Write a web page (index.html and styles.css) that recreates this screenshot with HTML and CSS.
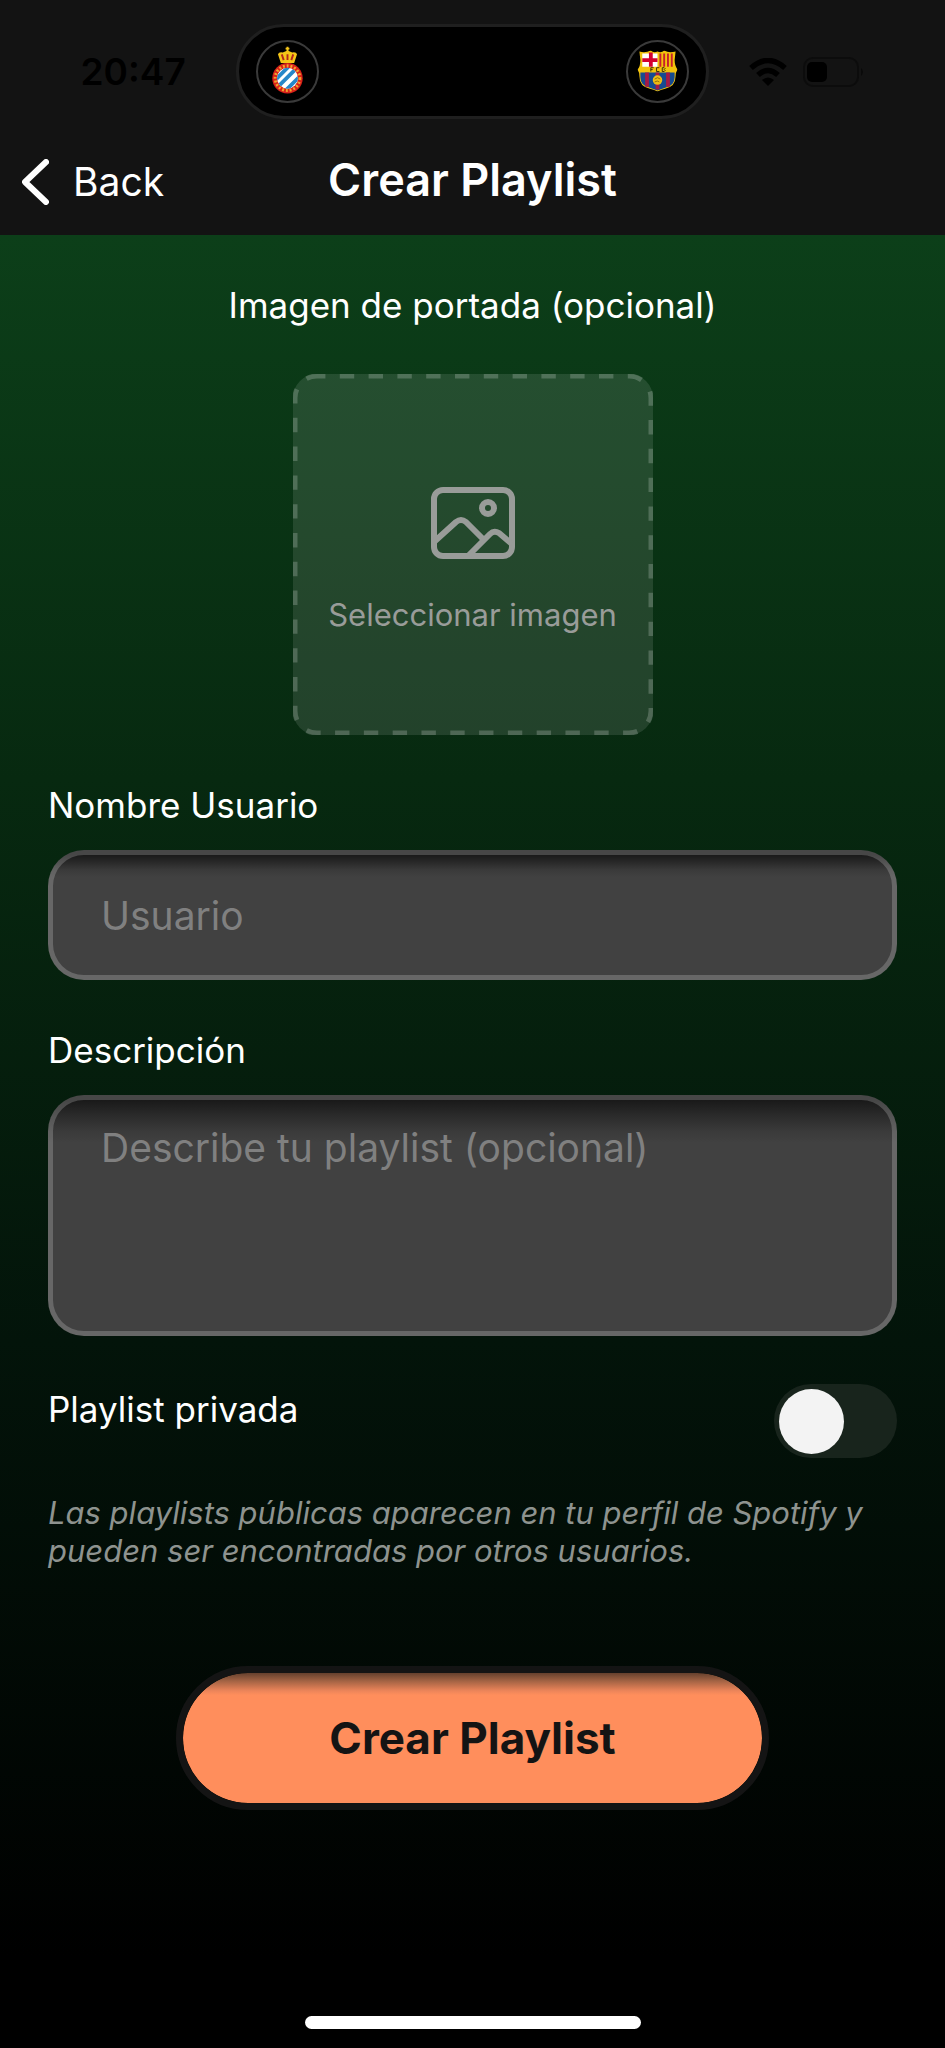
FILE: index.html
```html
<!DOCTYPE html>
<html lang="es">
<head>
<meta charset="utf-8">
<meta name="viewport" content="width=device-width, initial-scale=1">
<title>Crear Playlist</title>
<link rel="stylesheet" href="styles.css">
</head>
<body class="screen">
<header class="header">
  <div class="status">
    <time class="clock">20:47</time>
    <div class="island">
      <span class="team">
        <svg viewBox="0 0 62 62" aria-hidden="true">
          <path d="M21 13q1-3 5-2l5-2 5 2q4-1 5 2l-3 9H24z" fill="#f5c518"/>
          <path d="M31 5v5M29 7h4" stroke="#f5c518" stroke-width="2"/>
          <path d="M25 13l2 6M31 13v6M37 13l-2 6" stroke="#b3261e" stroke-width="2"/>
          <circle cx="31" cy="38" r="16" fill="#d9201a"/>
          <circle cx="31" cy="38" r="13" fill="none" stroke="#f0a52c" stroke-width="3" stroke-dasharray="2 2"/>
          <circle cx="31" cy="38" r="11" fill="#fff"/>
          <clipPath id="disc"><circle cx="31" cy="38" r="11"/></clipPath>
          <path clip-path="url(#disc)" d="M16 42l22-22M18 50l26-26M26 54l22-22" stroke="#2687c9" stroke-width="4"/>
        </svg>
      </span>
      <span class="team">
        <svg viewBox="0 0 62 62" aria-hidden="true">
          <clipPath id="shield"><path d="M12 10q6 2 12-1 3 3 7 1 4 2 7-1 5 3 12 1l-1 9q0 6 3 10-2 3-2 7 0 11-11 13-5 1-8 3-3-2-8-3-11-2-11-13 0-4-2-7 3-3 3-10z"/></clipPath>
          <g clip-path="url(#shield)">
            <path d="M8 6h46v50H8z" fill="#f2c20c"/>
            <path d="M15 12h16v14H15z" fill="#fff"/>
            <path d="M24 11v15M15 19h16" stroke="#d4002f" stroke-width="4"/>
            <path d="M34 12v14M38 12v14M42 12v14M46 12v14" stroke="#c8202c" stroke-width="2"/>
            <path d="M13 32h36v5q0 9-10 11l-8 3-8-3q-10-2-10-11z" fill="#164b91"/>
            <path d="M20 32v15M31 32v18M42 32v15" stroke="#a51a45" stroke-width="4"/>
            <circle cx="31" cy="40" r="5" fill="#f0bd12"/>
            <path d="M28 39q3-3 6 0M28 42q3-2 5 0" fill="none" stroke="#8a6a10"/>
            <path d="M27 27h-3v4m0-2h2M33 27h-3v4h3M36 27v4h2q2-1 0-2 2-1 0-2z" fill="none" stroke="#3a2c08"/>
          </g>
        </svg>
      </span>
    </div>
    <div class="indicators">
      <svg class="wifi" viewBox="0 0 38 28" aria-hidden="true">
        <path d="M2 10q17-15 34 0M9 17q10-9 20 0" fill="none" stroke="#000" stroke-width="5.500"/>
        <path d="M13 22q6-5 12 0l-6 6z"/>
      </svg>
      <svg class="battery" viewBox="0 0 62 30" aria-hidden="true">
        <rect x="1" y="1" width="54" height="28" rx="9" fill="none" stroke="#0c0c0c" stroke-width="2"/>
        <rect x="4" y="5" width="20" height="20" rx="5"/>
        <path d="M58 11q4 4 0 8z" fill="#0a0a0a"/>
      </svg>
    </div>
  </div>
  <nav class="nav">
    <button class="back" type="button">
      <svg class="chevron" viewBox="0 0 27 46" aria-hidden="true"><path d="M24 3L3 23l21 20" fill="none" stroke="#fff" stroke-width="6" stroke-linecap="round" stroke-linejoin="round"/></svg>
      Back
    </button>
    <h1 class="title">Crear Playlist</h1>
  </nav>
</header>

<form class="form">
  <div class="cover">
    <span class="label" id="cover-label">Imagen de portada (opcional)</span>
    <button class="picker" type="button" aria-describedby="cover-label">
      <svg class="picker-border" aria-hidden="true"><rect class="dash" rx="22"/></svg>
      <svg class="picture" viewBox="0 0 84 72" fill="none" stroke="#999c99" stroke-width="6" stroke-linejoin="round" aria-hidden="true">
        <rect x="3" y="3" width="78" height="66" rx="9"/>
        <circle cx="57" cy="21" r="6"/>
        <path d="M4 54L25 35q5-4 10 0l16 16M38 68l21-21q4-4 9-1l13 11"/>
      </svg>
      Seleccionar imagen
    </button>
  </div>

  <div class="field">
    <label class="label" for="user">Nombre Usuario</label>
    <input class="control" id="user" type="text" placeholder="Usuario">
  </div>

  <div class="field">
    <label class="label" for="description">Descripción</label>
    <textarea class="control area" id="description" placeholder="Describe tu playlist (opcional)"></textarea>
  </div>

  <div class="privacy">
    <label class="label" for="private">Playlist privada</label>
    <input class="switch" id="private" type="checkbox" role="switch">
  </div>
  <p class="hint">Las playlists públicas aparecen en tu perfil de Spotify y pueden ser encontradas por otros usuarios.</p>

  <button class="submit" type="submit">Crear Playlist</button>
</form>
<div class="home"></div>
</body>
</html>
```
FILE: styles.css
```css
* {
  box-sizing: border-box;
}

.screen {
  margin: 0;
  min-height: 100vh;
  display: flex;
  flex-direction: column;
  background: #000;
  color: #fff;
  font-family: Inter, "Liberation Sans", sans-serif;
}

.header {
  background: #131313;
  padding-top: 24px;
}

.status {
  display: grid;
  grid-template-columns: 1fr 50% 1fr;
  align-items: center;
}

.clock {
  padding-left: 30px;
  text-align: center;
  color: #000;
  font-size: 37px;
  font-weight: 600;
  line-height: 40px;
}

.island {
  display: flex;
  justify-content: space-between;
  padding: 13px 17px;
  border: 3px solid #1f1f1f;
  border-radius: 48px;
  background: #000;
}

.team {
  width: 63px;
  height: 63px;
  border: 2px solid #3a3a3a;
  border-radius: 50%;
}

.team svg {
  display: block;
  width: 100%;
}

.indicators {
  display: flex;
  align-items: center;
  gap: 16px;
  padding-left: 40px;
}

.wifi {
  width: 38px;
}

.battery {
  width: 62px;
}

.nav {
  display: grid;
  grid-template-columns: 1fr auto 1fr;
  align-items: center;
  height: 116px;
  padding: 6px 22px 0;
}

.back {
  display: flex;
  align-items: center;
  gap: 24px;
  padding: 4px 0 0;
  border: 0;
  background: none;
  color: #fff;
  font: 400 39px/48px Inter, "Liberation Sans", sans-serif;
}

.chevron {
  width: 27px;
}

.title {
  margin: 0;
  font-size: 45px;
  font-weight: 600;
  line-height: 56px;
}

.form {
  flex: 1;
  display: flex;
  flex-direction: column;
  padding: 48px 48px 0;
  background: linear-gradient(#0c3f19, #072910 30%, #03140a 61%, #000 95%);
}

.label {
  font-size: 35px;
  line-height: 44px;
}

.cover {
  display: flex;
  flex-direction: column;
  align-items: center;
  gap: 47px;
  margin-bottom: 48px;
}

.picker {
  position: relative;
  display: flex;
  flex-direction: column;
  align-items: center;
  justify-content: center;
  gap: 36px;
  width: 360px;
  height: 361px;
  padding: 12px 0 0;
  border: 0;
  border-radius: 24px;
  background: rgba(255, 255, 255, 0.11);
  color: #999c99;
  font: 400 31px/40px Inter, "Liberation Sans", sans-serif;
}

.picker-border {
  position: absolute;
  inset: 0;
  width: 100%;
  height: 100%;
}

.dash {
  x: 2px;
  y: 2px;
  width: calc(100% - 4px);
  height: calc(100% - 4px);
  fill: none;
  stroke: rgba(255, 255, 255, 0.2);
  stroke-width: 5px;
  stroke-dasharray: 14.400 14.400;
  stroke-dashoffset: 6px;
}

.picture {
  width: 84px;
}

.field {
  display: flex;
  flex-direction: column;
  gap: 23px;
  margin-bottom: 48px;
}

.control {
  width: 100%;
  height: 130px;
  padding: 0 48px;
  border: 5px solid rgba(255, 255, 255, 0.2);
  border-radius: 36px;
  background: linear-gradient(#1a1a1a 5px, #282828 12px, #3a3a3a 20px, #414141 27px) border-box;
  color: #fff;
  font: 400 39px/48px Inter, "Liberation Sans", sans-serif;
  outline: 0;
}

.control::placeholder {
  color: #808080;
  opacity: 1;
}

.area {
  display: block;
  height: 241px;
  padding: 24px 48px;
  resize: none;
  background: linear-gradient(#191919 5px, #2a2a2a 20px, #3a3a3a 36px, #414141 48px) border-box;
}

.privacy {
  display: flex;
  justify-content: space-between;
  align-items: flex-start;
  margin-bottom: 36px;
}

.privacy .label {
  padding-top: 3px;
}

.switch {
  appearance: none;
  width: 123px;
  height: 74px;
  margin: 0;
  padding: 5px;
  border-radius: 37px;
  background: #18241c;
}

.switch::before {
  content: "";
  display: block;
  width: 65px;
  height: 65px;
  border-radius: 50%;
  background: #f3f3f3;
}

.switch:checked::before {
  margin-left: auto;
}

.hint {
  margin: 0 0 96px;
  color: #8e938f;
  font-size: 31px;
  font-style: italic;
  line-height: 38px;
}

.submit {
  align-self: center;
  width: 593px;
  height: 144px;
  border: 7px solid #141414;
  border-radius: 72px;
  background: linear-gradient(#65402d, #a36344 8px, #ed855a 18px, #ff8e5c 22px) padding-box;
  color: #141414;
  font: 700 44px/56px Inter, "Liberation Sans", sans-serif;
}

.home {
  position: fixed;
  bottom: 19px;
  left: 50%;
  width: 336px;
  height: 13px;
  margin-left: -168px;
  border-radius: 7px;
  background: #fff;
}
```
